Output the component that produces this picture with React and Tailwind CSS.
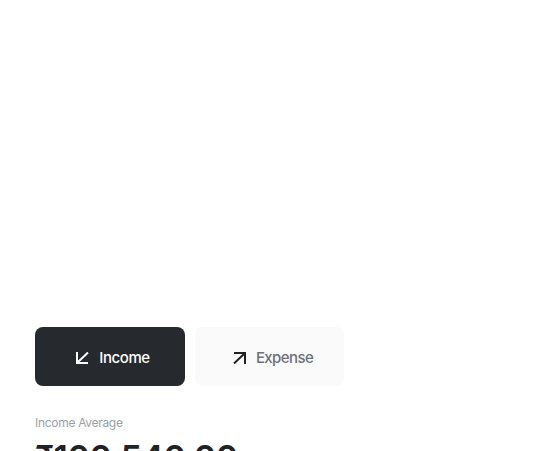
function ArrowIn() {
  return (
    <svg width="13" height="12" viewBox="0 0 13 12" fill="none" stroke="currentColor" strokeWidth="2">
      <path d="M1 0v11h11" />
      <path d="M1.5 10.5 12 0.5" />
    </svg>
  );
}

function ArrowOut() {
  return (
    <svg width="13" height="12" viewBox="0 0 13 12" fill="none" stroke="currentColor" strokeWidth="2">
      <path d="M1 1h11v11" />
      <path d="M11.5 1.5 1 11.5" />
    </svg>
  );
}

export default function App() {
  return (
    <div className="w-[538px] h-[451px] overflow-hidden bg-white font-['Inter',sans-serif]">
      <div className="pt-[327px] px-[35px]">
        <div className="flex gap-[10px]">
          <button className="w-[150px] h-[59px] pl-[6px] pt-[3px] rounded-lg bg-[#26292e] text-white flex items-center justify-center gap-[10px] text-[15px] font-medium tracking-[-0.4px]">
            <ArrowIn />
            Income
          </button>
          <button className="w-[149px] h-[59px] pl-[7px] pt-[3px] rounded-lg bg-[#fafafa] text-[#6b7079] flex items-center justify-center gap-[10px] text-[15px] font-medium tracking-[-0.6px]">
            <span className="text-[#1f2226] flex"><ArrowOut /></span>
            Expense
          </button>
        </div>
        <p className="mt-[28px] text-[12px] text-[#9a9ea6] tracking-[-0.3px]">Income Average</p>
        <p className="mt-[7px] text-[34px] leading-[38px] font-semibold text-[#1f2226] tracking-[-0.5px]">₹100,540.00</p>
      </div>
    </div>
  );
}
